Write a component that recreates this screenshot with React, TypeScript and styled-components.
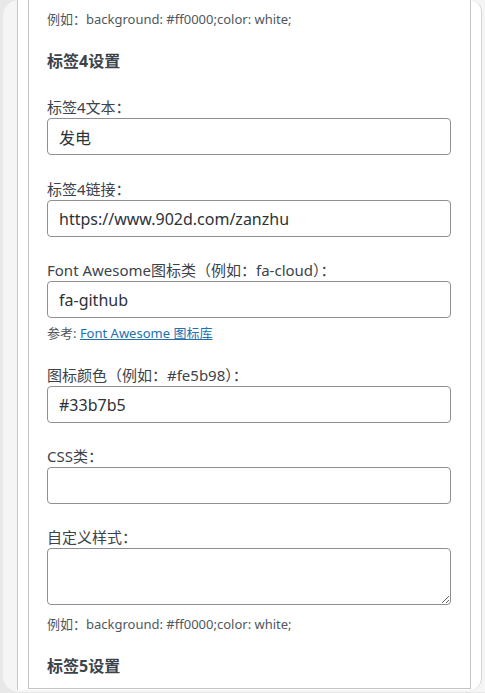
import React from 'react'
import styled, { createGlobalStyle } from 'styled-components'

const GlobalStyle = createGlobalStyle`
  html, body {
    margin: 0;
    padding: 0;
    background: #e8e8e8;
  }
  body {
    font-family: "Noto Sans", "Noto Sans CJK SC", sans-serif;
    color: #3c434a;
  }
`

// light grey frame round the white settings panel
const Frame = styled.div`
  box-sizing: border-box;
  margin-left: 3px;
  width: 482px;
  height: 692px;
  background: #f5f5f5;
  border-top-left-radius: 16px;
  border-bottom-left-radius: 16px;
  overflow: hidden;
  padding-left: 14px;
`

const Panel = styled.div`
  box-sizing: border-box;
  width: 465px;
  height: 690px;
  background: #fff;
  border-left: 1px solid #c8c8c8;
  border-right: 1px solid #d6d6d6;
  border-top-right-radius: 12px;
  border-bottom-right-radius: 12px;
  padding-left: 10px;
`

const Widget = styled.div`
  box-sizing: border-box;
  width: 443px;
  height: 689px;
  border: 1px solid #c3c4c7;
  border-top: none;
  padding: 10px 19px 0 18px;
`

const Hint = styled.p<{ $top?: number }>`
  margin: ${p => p.$top ?? 0}px 0 0;
  font-size: 13px;
  line-height: 18px;
  color: #50575e;
`

const Heading = styled.h4<{ $top: number }>`
  margin: ${p => p.$top}px 0 0;
  font-size: 16px;
  line-height: 22px;
  font-weight: 700;
  color: #3c434a;
`

const Field = styled.div<{ $top: number }>`
  margin-top: ${p => p.$top}px;
  display: flex;
  flex-direction: column;
`

const Label = styled.label`
  font-size: 15px;
  line-height: 22px;
  color: #3c434a;
`

const Input = styled.input`
  box-sizing: border-box;
  width: 100%;
  height: 37px;
  margin: 0;
  padding: 0 11px;
  border: 1px solid #8c8f94;
  border-radius: 4px;
  background: #fff;
  font-family: "Noto Sans", "Noto Sans CJK SC", sans-serif;
  font-size: 16px;
  color: #2c3338;
  outline: none;
`

const TextArea = styled.textarea`
  box-sizing: border-box;
  display: block;
  width: 100%;
  height: 57px;
  margin: 0;
  padding: 6px 11px;
  border: 1px solid #8c8f94;
  border-radius: 4px;
  background: #fff;
  font-family: "Noto Sans", "Noto Sans CJK SC", sans-serif;
  font-size: 16px;
  color: #2c3338;
  outline: none;
`

const Link = styled.a`
  color: #2271b1;
  text-decoration: underline;
`

export default function App (): JSX.Element {
  return (
    <>
      <GlobalStyle />
      <Frame>
        <Panel>
          <Widget>
            <Hint>例如：background: #ff0000;color: white;</Hint>
            <Heading $top={22}>标签4设置</Heading>
            <Field $top={24}>
              <Label>标签4文本：</Label>
              <Input defaultValue="发电" />
            </Field>
            <Field $top={23}>
              <Label>标签4链接：</Label>
              <Input defaultValue="https://www.902d.com/zanzhu" />
            </Field>
            <Field $top={22}>
              <Label>Font Awesome图标类（例如：fa-cloud）：</Label>
              <Input defaultValue="fa-github" />
            </Field>
            <Hint $top={6}>参考: <Link href="#">Font Awesome 图标库</Link></Hint>
            <Field $top={22}>
              <Label>图标颜色（例如：#fe5b98）：</Label>
              <Input defaultValue="#33b7b5" />
            </Field>
            <Field $top={22}>
              <Label>CSS类：</Label>
              <Input defaultValue="" />
            </Field>
            <Field $top={22}>
              <Label>自定义样式：</Label>
              <TextArea defaultValue="" />
            </Field>
            <Hint $top={10}>例如：background: #ff0000;color: white;</Hint>
            <Heading $top={22}>标签5设置</Heading>
          </Widget>
        </Panel>
      </Frame>
    </>
  )
}
